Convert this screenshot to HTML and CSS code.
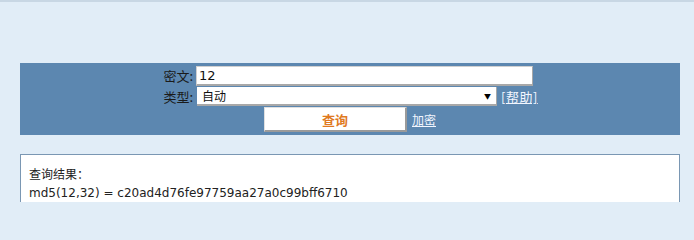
FILE: index.html
```html
<!DOCTYPE html>
<html>
<head>
<meta charset="utf-8">
<link rel="stylesheet" href="styles.css">
</head>
<body>
<div class="topline"></div>
<div class="page">
  <form class="panel">
    <div class="row">
      <label class="lbl">密文:</label>
      <input class="txt" type="text" value="12">
    </div>
    <div class="row">
      <label class="lbl">类型:</label>
      <div class="sel"><span>自动</span><span class="arrow">▼</span></div>
      <a class="link help" href="#">[帮助]</a>
    </div>
    <div class="row btnrow">
      <button class="btn" type="button">查询</button>
      <a class="link" href="#">加密</a>
    </div>
  </form>
  <div class="result">
    <div>查询结果：</div>
    <div>md5(12,32) = c20ad4d76fe97759aa27a0c99bff6710</div>
  </div>
</div>
</body>
</html>
```

FILE: styles.css
```css
html, body {
  margin: 0;
  padding: 0;
  background: #e1edf7;
  font-family: "DejaVu Sans", "Noto Sans CJK SC", sans-serif;
  font-size: 12px;
  color: #111;
  overflow: hidden;
}
html { height: 202px; }
body { height: 202px; }
.topline {
  height: 2px;
  background: #c8d7e4;
}
.page {
  padding: 61px 14px 0 20px;
}
.panel {
  margin: 0;
  width: 660px;
  background: #5c87b0;
  padding: 3px 0 3px 0;
  box-sizing: border-box;
}
.row {
  display: flex;
  align-items: center;
}
.lbl {
  width: 176px;
  text-align: right;
  padding-right: 3px;
  box-sizing: border-box;
  font-family: "Noto Sans CJK SC", sans-serif;
  font-size: 13px;
  line-height: 18px;
  color: #1a1a1a;
}
.txt {
  width: 337px;
  height: 20px;
  box-sizing: border-box;
  margin: 0;
  border: 1px solid #d0d0d0;
  border-bottom: 2px solid #a8a8a8;
  border-right: 1px solid #a8a8a8;
  background: #fff;
  padding: 0 2px;
  font-family: "DejaVu Sans", sans-serif;
  font-size: 13px;
  color: #111;
  outline: none;
}
.row + .row { margin-top: 1px; }
.sel {
  margin-left: 1px;
  width: 300px;
  height: 19px;
  box-sizing: border-box;
  background: #fff;
  border-bottom: 2px solid #a8a8a8;
  border-right: 1px solid #a8a8a8;
  display: flex;
  align-items: center;
  justify-content: space-between;
  padding: 0 5px 0 5px;
  font-family: "Noto Sans CJK SC", sans-serif;
  font-size: 12px;
}
.arrow {
  font-size: 7px;
  color: #000;
}
.link {
  color: #f2f6ff;
  font-family: "Noto Sans CJK SC", sans-serif;
  font-size: 12px;
  text-decoration: underline;
  margin-left: 4px;
}
.help {
  font-size: 13px;
  letter-spacing: 0.5px;
}
.btnrow {
  padding-left: 244px;
  margin-top: 2px;
}
.btnrow .link { margin-left: 5px; }
.btn {
  width: 143px;
  height: 25px;
  margin: 0;
  background: #fff;
  border: 1px solid #e0e0e0;
  border-right: 2px solid #9a9a9a;
  border-bottom: 2px solid #9a9a9a;
  color: #e07a1f;
  font-family: "Noto Sans CJK SC", sans-serif;
  font-weight: bold;
  font-size: 13px;
  padding: 0;
}
.result {
  margin-top: 19px;
  width: 660px;
  box-sizing: border-box;
  height: 48px;
  background: #fff;
  border: 1px solid #7a97b3;
  border-bottom: none;
  padding: 11px 8px 0;
  line-height: 18px;
  font-size: 12px;
  color: #222;
}
```
